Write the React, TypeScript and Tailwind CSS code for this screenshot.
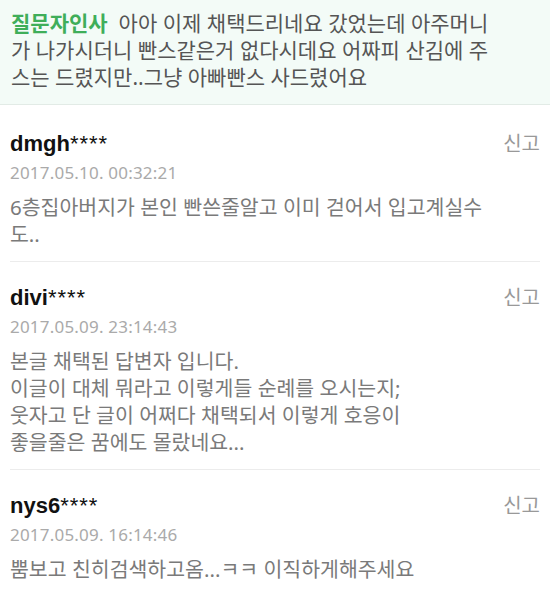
import React from "react";

type Comment = {
    user: string;
    date: string;
    lines: string[];
};

const comments: Comment[] = [
    {
        user: "dmgh",
        date: "2017.05.10. 00:32:21",
        lines: ["6층집아버지가 본인 빤쓴줄알고 이미 걷어서 입고계실수", "도.."],
    },
    {
        user: "divi",
        date: "2017.05.09. 23:14:43",
        lines: [
            "본글 채택된 답변자 입니다.",
            "이글이 대체 뭐라고 이렇게들 순례를 오시는지;",
            "웃자고 단 글이 어쩌다 채택되서 이렇게 호응이",
            "좋을줄은 꿈에도 몰랐네요...",
        ],
    },
    {
        user: "nys6",
        date: "2017.05.09. 16:14:46",
        lines: ["뿜보고 친히검색하고옴...ㅋㅋ 이직하게해주세요"],
    },
];

const font = "font-['Noto_Sans','Noto_Sans_CJK_KR',sans-serif]";

export default function App() {
    return (
        <div className={`w-[550px] min-h-[599px] bg-white ${font}`}>
            {/* Questioner's thank-you note */}
            <div className="bg-[#f3fbf7] border-b border-[#e2ebe6] px-[11px] pt-[10px] pb-[13px]">
                <div className="text-[21px] leading-[27px] text-[#555] whitespace-nowrap">
                    <p>
                        <span className="text-[#3fae5a] font-bold mr-[11px]">질문자인사</span>
                        아아 이제 채택드리네요 갔었는데 아주머니
                    </p>
                    <p>가 나가시더니 빤스같은거 없다시데요 어짜피 산김에 주</p>
                    <p>스는 드렸지만..그냥 아빠빤스 사드렸어요</p>
                </div>
            </div>

            {/* Answer comments */}
            <ul className="px-[10px] pt-[3px]">
                {comments.map((c, i) => (
                    <li
                        key={c.user}
                        className={`pt-[24px] pb-[13px] ${
                            i < comments.length - 1 ? "border-b border-[#ececec]" : ""
                        }`}
                    >
                        <div className="flex items-start justify-between">
                            <div className="font-['Liberation_Sans',sans-serif] text-[22px] leading-[24px] font-bold text-[#111]">
                                {c.user}
                                <span className="font-normal tracking-[1px]">****</span>
                            </div>
                            <button className="text-[20px] leading-[24px] text-[#999]">
                                신고
                            </button>
                        </div>
                        <div className="mt-[7px] text-[17px] leading-[20px] tracking-[0.2px] text-[#aaa]">
                            {c.date}
                        </div>
                        <div className="mt-[11px] text-[20.5px] leading-[27px] text-[#7a7a7a] whitespace-nowrap">
                            {c.lines.map((l) => (
                                <p key={l}>{l}</p>
                            ))}
                        </div>
                    </li>
                ))}
            </ul>
        </div>
    );
}
